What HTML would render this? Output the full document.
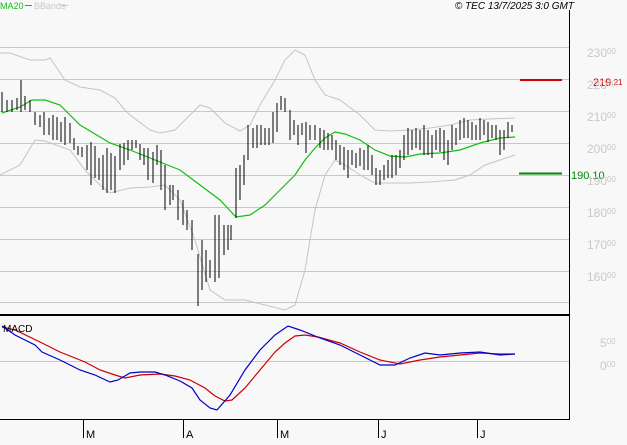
<!DOCTYPE html><html><head><style>
body{margin:0;background:#f8f8f8;width:627px;height:440px;overflow:hidden;font-family:"Liberation Sans",sans-serif}
</style></head><body>
<svg width="627" height="440" xmlns="http://www.w3.org/2000/svg" font-family="Liberation Sans, sans-serif">
<rect width="627" height="440" fill="#f8f8f8"/>
<g stroke="#c8c8c8" stroke-width="1">
<line x1="0" y1="47.5" x2="569" y2="47.5"/><line x1="0" y1="79.5" x2="569" y2="79.5"/><line x1="0" y1="111.5" x2="569" y2="111.5"/><line x1="0" y1="143.5" x2="569" y2="143.5"/><line x1="0" y1="175.5" x2="569" y2="175.5"/><line x1="0" y1="207.5" x2="569" y2="207.5"/><line x1="0" y1="239.5" x2="569" y2="239.5"/><line x1="0" y1="271.5" x2="569" y2="271.5"/><line x1="0" y1="302.5" x2="569" y2="302.5"/>
<line x1="0" y1="361.5" x2="569" y2="361.5"/>
</g>
<g fill="none" stroke="#c4c4c4" stroke-width="1">
<polyline points="0,53 10,53 30,60 45,60 50,58 65,80 80,87 100,90 115,98 125,110 130,115 150,130 160,133 175,130 190,115 200,105 210,108 225,123 240,131 250,125 260,105 275,80 285,60 295,50 305,55 315,80 325,95 340,100 360,115 375,130 390,131 410,130 430,128 450,125 470,120 490,119 515,118"/>
<polyline points="0,175 20,165 35,140 45,141 70,150 85,170 100,185 110,193 130,188 150,187 165,185 180,200 195,240 210,290 225,300 245,300 265,305 285,310 295,305 305,270 315,210 325,175 335,160 345,165 360,175 375,183 390,183 410,183 430,182 455,180 470,175 485,165 500,160 515,155"/>
</g>
<polyline fill="none" stroke="#10c010" stroke-width="1.2" points="2,113 20,107 32,100 45,100 60,105 80,125 110,143 130,150 160,162 180,170 200,185 220,200 236,217 250,215 265,205 280,190 295,175 305,160 315,148 325,138 335,132 345,134 360,140 375,150 390,156 405,157 420,154 440,153 460,150 480,143 500,138 515,137"/>
<g stroke="#000" stroke-width="1" fill="none">
<path d="M2 92V112M7 100V112M12 100V112M17 98V110M21 80V112M25 96V110M30 100V112M35 112V125M40 115V127M44 112V135M49 118V135M53 115V140M57 117V140M61 122V142M65 117V145M70 123V143M74 138V150M78 146V155M82 147V157M87 145V170M91 142V185M95 146V178M99 158V180M103 155V190M107 148V193M111 153V190M115 156V193M120 144V170M124 143V165M128 140V160M132 140V150M136 140V148M140 144V160M144 148V165M148 148V180M153 152V183M157 145V165M161 150V190M165 165V210M170 185V205M173 185V200M178 190V220M183 200V225M187 210V230M192 220V250M198 254V306M202 240V290M206 250V282M210 260V278M215 215V282M219 215V278M224 225V255M228 225V250M231 225V240M236 168V218M240 165V200M244 155V185M248 125V160M253 128V148M257 125V148M261 125V145M265 128V145M269 128V145M273 112V143M277 103V132M281 96V110M285 98V112M290 110V140M294 120V135M298 125V145M302 123V135M306 122V153M310 125V140M315 125V140M320 128V148M324 130V150M328 133V150M332 135V150M336 140V160M340 145V165M344 147V170M348 150V178M352 150V165M356 153V168M360 148V166M364 150V170M368 145V170M372 155V175M376 168V185M380 170V185M384 165V180M388 160V178M392 155V178M396 155V175M400 150V168M404 135V160M408 128V155M412 130V150M416 128V148M420 130V150M424 125V155M428 130V155M432 135V158M436 130V150M440 128V152M444 130V160M448 140V165M452 125V150M456 128V145M460 120V140M464 118V138M468 120V138M472 122V140M476 125V140M480 118V140M484 120V135M488 122V142M492 125V138M496 125V140M500 130V155M504 130V150M508 122V138M512 125V132"/>
</g>
<line x1="520" y1="80" x2="562" y2="80" stroke="#cc0000" stroke-width="2"/>
<text x="593" y="86" font-size="11" fill="#cc0000">219<tspan font-size="8" dy="-1">.21</tspan></text>
<line x1="519" y1="173.5" x2="562" y2="173.5" stroke="#008800" stroke-width="2"/>
<text x="571" y="179" font-size="11" fill="#008800">190.10</text>
<g fill="#c8c8c8" font-size="12">
<text x="587" y="57">230<tspan font-size="8" dy="-3">00</tspan></text>
<text x="587" y="89">220<tspan font-size="8" dy="-3">00</tspan></text>
<text x="587" y="121">210<tspan font-size="8" dy="-3">00</tspan></text>
<text x="587" y="153">200<tspan font-size="8" dy="-3">00</tspan></text>
<text x="587" y="185">190<tspan font-size="8" dy="-3">00</tspan></text>
<text x="587" y="217">180<tspan font-size="8" dy="-3">00</tspan></text>
<text x="587" y="249">170<tspan font-size="8" dy="-3">00</tspan></text>
<text x="587" y="281">160<tspan font-size="8" dy="-3">00</tspan></text>
<text x="600" y="347">5<tspan font-size="8" dy="-3">00</tspan></text>
<text x="600" y="370">0<tspan font-size="8" dy="-3">00</tspan></text>
</g>
<polyline fill="none" stroke="#cc0000" stroke-width="1.2" points="2,327 15,330 40,342 60,352 85,362 100,370 115,375 125,378 140,375 160,374 175,376 190,380 205,388 215,396 225,401 232,400 245,388 260,370 275,352 285,343 295,336 305,335 318,337 340,343 360,352 380,360 400,364 420,360 440,357 460,355 480,353 500,354 515,354"/>
<polyline fill="none" stroke="#0000cc" stroke-width="1.2" points="2,326 15,335 35,345 42,352 60,360 80,370 95,375 110,382 118,380 130,373 140,372 155,372 165,375 180,381 192,388 200,400 210,408 217,410 230,395 245,370 260,350 275,335 288,326 300,330 320,338 340,345 360,355 380,365 395,365 410,358 425,353 440,355 460,353 480,352 500,355 515,354"/>
<text x="3" y="332" font-size="10" fill="#000">MACD</text>
<rect x="0" y="314" width="570" height="2" fill="#000"/>
<line x1="569.5" y1="10" x2="569.5" y2="420" stroke="#000"/>
<line x1="0" y1="419.5" x2="570" y2="419.5" stroke="#000"/>
<g stroke="#000"><line x1="83.5" y1="419" x2="83.5" y2="438"/><line x1="183.5" y1="419" x2="183.5" y2="438"/><line x1="277.5" y1="419" x2="277.5" y2="438"/><line x1="378.5" y1="419" x2="378.5" y2="438"/><line x1="477.5" y1="419" x2="477.5" y2="438"/></g>
<g font-size="11" fill="#000"><text x="86" y="438">M</text><text x="186" y="438">A</text><text x="280" y="438">M</text><text x="381" y="438">J</text><text x="480" y="438">J</text></g>
<text x="0" y="9" font-size="9" fill="#10c010">MA20</text>
<line x1="25" y1="5.5" x2="32" y2="5.5" stroke="#10c010"/>
<text x="34" y="9" font-size="9" fill="#c8c8c8">BBands</text>
<line x1="61" y1="5.5" x2="68" y2="5.5" stroke="#c8c8c8"/>
<text x="574" y="9" font-size="10" font-style="italic" fill="#000" text-anchor="end">© TEC 13/7/2025 3:0 GMT</text>
</svg>
</body></html>
